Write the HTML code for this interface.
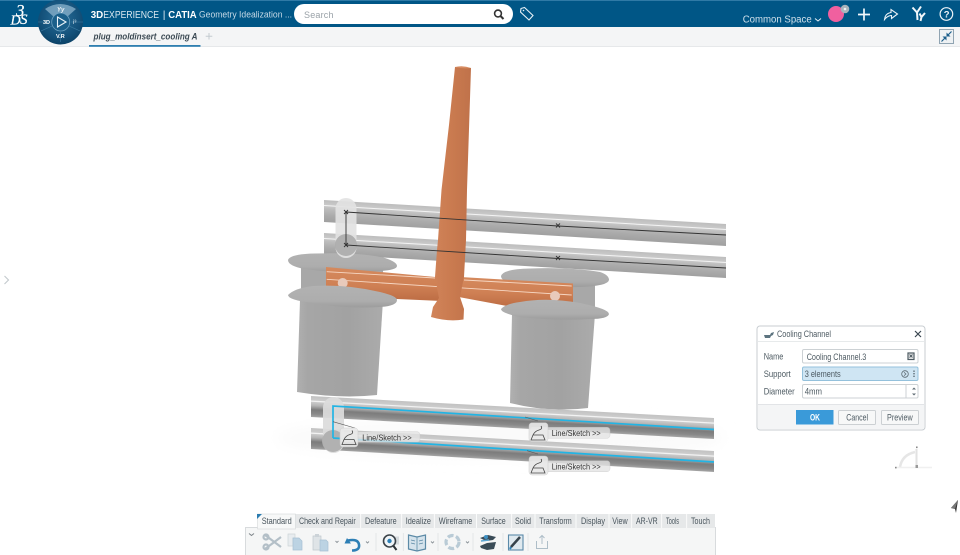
<!DOCTYPE html>
<html><head><meta charset="utf-8"><style>
html,body{margin:0;padding:0;width:960px;height:555px;overflow:hidden;background:#fff;font-family:"Liberation Sans",sans-serif}
svg{position:absolute;left:0;top:0}
</style></head><body>
<svg width="960" height="555" viewBox="0 0 960 555" xmlns="http://www.w3.org/2000/svg" font-family="Liberation Sans, sans-serif">
<defs>
<linearGradient id="pipe" x1="0" y1="0" x2="0" y2="1"><stop offset="0" stop-color="#bdbdbd"/><stop offset=".25" stop-color="#cbcbcb"/><stop offset=".4" stop-color="#bcbcbc"/><stop offset=".7" stop-color="#ababab"/><stop offset="1" stop-color="#a0a0a0"/></linearGradient>
<linearGradient id="pipe2" x1="0" y1="0" x2="0" y2="1"><stop offset="0" stop-color="#c2c2c2"/><stop offset=".25" stop-color="#cfcfcf"/><stop offset=".45" stop-color="#b5b5b5"/><stop offset=".65" stop-color="#7c7c7c"/><stop offset=".85" stop-color="#8a8a8a"/><stop offset="1" stop-color="#a5a5a5"/></linearGradient>
<linearGradient id="cyl" x1="0" y1="0" x2="1" y2="0"><stop offset="0" stop-color="#b0b0b0"/><stop offset=".12" stop-color="#a6a6a6"/><stop offset=".6" stop-color="#a2a2a2"/><stop offset="1" stop-color="#ababab"/></linearGradient>
<linearGradient id="cap" x1="0" y1="0" x2="0" y2="1"><stop offset="0" stop-color="#b2b2b2"/><stop offset=".7" stop-color="#adadad"/><stop offset="1" stop-color="#9c9c9c"/></linearGradient>
<linearGradient id="cop" x1="0" y1="0" x2="1" y2="0"><stop offset="0" stop-color="#d1845a"/><stop offset=".5" stop-color="#ca7b50"/><stop offset="1" stop-color="#c0724a"/></linearGradient>
<linearGradient id="copH" x1="0" y1="0" x2="0" y2="1"><stop offset="0" stop-color="#d58a5e"/><stop offset=".55" stop-color="#cf8054"/><stop offset="1" stop-color="#bd6d44"/></linearGradient>
<radialGradient id="comp" cx=".5" cy=".4" r=".65"><stop offset="0" stop-color="#2a6f9a"/><stop offset=".7" stop-color="#124f78"/><stop offset="1" stop-color="#0b3f62"/></radialGradient>
<filter id="b2" x="-20%" y="-50%" width="140%" height="200%"><feGaussianBlur stdDeviation="7"/></filter>
</defs>

<!-- top bar -->
<rect width="960" height="27" fill="#005686"/>
<rect width="960" height="1" fill="#2f7aa6"/>
<rect y="27" width="960" height="19" fill="#f4f5f6"/>
<rect y="46" width="960" height="1" fill="#e6e8ea"/>
<g font-family="Liberation Serif, serif" font-style="italic" fill="#fff" stroke="#fff" stroke-width=".2">
<text x="16" y="16" font-size="17">3</text>
<text x="10.500" y="24.500" font-size="14">D</text>
<text x="20" y="24" font-size="15">S</text>
</g>
<circle cx="60.500" cy="22" r="22.500" fill="url(#comp)"/>
<path d="M45 9Q60 -1 76 9L67 17Q60 13 54 17Z" fill="#86aec8" opacity=".8"/>
<path d="M41 31L52 26M80 31L69 26M60.500 32V42M38 22H50M71 22H83" stroke="#3f7ea5" stroke-width=".6"/>
<circle cx="60.700" cy="22" r="9" fill="#1a5f8a" stroke="#6fa3c3" stroke-width=".8"/>
<path d="M57.500 17L66 22L57.500 27Z" fill="none" stroke="#e8f2f8" stroke-width="1.100"/>
<text x="57" y="11.500" font-size="6" font-style="italic" font-weight="bold" fill="#eef4f8">Yy</text>
<text x="43" y="24" font-size="5.500" fill="#fff" font-weight="bold">3D</text>
<text x="73" y="24" font-size="6" fill="#dfeaf2">i³</text>
<text x="56" y="38" font-size="5.500" fill="#fff" font-weight="bold">V.R</text>

<g font-size="10.500" fill="#dbe8f0">
<text x="90.700" y="18" font-weight="bold" fill="#fff" textLength="12.500" lengthAdjust="spacingAndGlyphs">3D</text>
<text x="103.300" y="18" textLength="55.700" lengthAdjust="spacingAndGlyphs">EXPERIENCE</text>
<text x="162.800" y="18">|</text>
<text x="168.300" y="18" font-weight="bold" fill="#fff" textLength="28.400" lengthAdjust="spacingAndGlyphs">CATIA</text>
</g>
<text x="199" y="17.500" font-size="9" fill="#c5d9e6" textLength="93" lengthAdjust="spacingAndGlyphs">Geometry Idealization ...</text>
<rect x="294" y="4" width="219" height="20" rx="10" fill="#fff"/>
<text x="304" y="18" font-size="9" letter-spacing=".2" fill="#9aa2a8">Search</text>
<circle cx="498" cy="13.500" r="3.400" fill="none" stroke="#333" stroke-width="1.600"/><path d="M500.500 16L503.500 19" stroke="#333" stroke-width="2"/>
<path d="M521 8.500L524.500 7.500L533 15.500L529 20L520.500 12Z" fill="none" stroke="#e6f0f6" stroke-width="1.100"/><circle cx="523.500" cy="10.500" r=".8" fill="#e6f0f6"/>
<text x="742.700" y="22.500" font-size="10" fill="#cfe0eb" textLength="69" lengthAdjust="spacingAndGlyphs">Common Space</text>
<path d="M815 18.500L818 21L821 18.500" fill="none" stroke="#e6f0f6" stroke-width="1"/>
<circle cx="836" cy="14" r="8" fill="#f0609f"/>
<circle cx="845" cy="9" r="4.300" fill="#a9b4bc"/><circle cx="845" cy="9" r="1.300" fill="#eef2f4"/>
<path d="M864 8.500v12M858 14.500h12" stroke="#f2f7fa" stroke-width="1.700"/>
<path d="M884.500 19.500Q885 13.500 891 12.500V9.500L897.500 14L891.500 18.500V15.500Q887.500 15.500 884.500 19.500Z" fill="none" stroke="#eaf2f7" stroke-width="1.100"/>
<path d="M912.500 7.500L917 12.500L917.500 20M921 6.500L917 12.500M925 13L921.500 17M919.500 13.500L921.500 17L920.500 21" fill="none" stroke="#f2f7fa" stroke-width="2"/>
<circle cx="946.400" cy="14" r="6.300" fill="none" stroke="#eef4f8" stroke-width="1.200"/>
<text x="943.700" y="17.500" font-size="9.500" font-weight="bold" fill="#eef4f8">?</text>

<text x="93.500" y="39.500" font-size="9.500" font-weight="bold" font-style="italic" fill="#3c4a54" textLength="104" lengthAdjust="spacingAndGlyphs">plug_moldinsert_cooling A</text>
<rect x="89" y="45" width="111.500" height="1.800" fill="#2f7fb0"/>
<path d="M209 33v6.500M205.700 36.200h6.600" stroke="#c3cbd0" stroke-width="1"/>
<rect x="939.500" y="29.500" width="14" height="14" fill="#eef1f3" stroke="#90a4b2"/>
<path d="M951.500 31.500L947.500 35.500M941.500 41.500L945.500 37.500" stroke="#1d5f8b" stroke-width="1.200"/>
<path d="M946.500 32.500V36.500H950.500ZM946.500 40.500V36.500H942.500Z" fill="#1d5f8b"/>
<path d="M4.500 276L8.500 280L4.500 284" fill="none" stroke="#c3c9cd" stroke-width="1.100"/>

<!-- soft shadow -->
<ellipse cx="500" cy="438" rx="225" ry="20" fill="#fafafa" filter="url(#b2)"/>

<!-- upper pipes -->
<g transform="matrix(1 .0597 0 1 324 200)"><rect width="402" height="22" fill="url(#pipe)"/><rect y="5" width="402" height="1" fill="#f4f4f4"/></g>
<g transform="matrix(1 .0597 0 1 324 233)"><rect width="402" height="21" fill="url(#pipe)"/><rect y="5" width="402" height="1" fill="#f4f4f4"/></g>

<!-- back cylinders -->
<path d="M301 262H383V300H301Z" fill="#a8a8a8"/>
<path d="M514 280H595V315H514Z" fill="#a8a8a8"/>
<path d="M288 260Q290 254 315 253.500Q360 252 385 258Q397 262 397 266Q397 270 380 271Q340 274 305 269Q288 266 288 260Z" fill="url(#cap)"/>
<path d="M501 276Q503 269 530 268.500Q570 267 600 272Q609 275 609 280Q608 286 580 287Q540 288 512 283Q501 281 501 276Z" fill="url(#cap)"/>

<!-- copper -->
<polygon points="326,267 442,277.600 442,301 397,299 326,292" fill="url(#copH)"/>
<polygon points="456,276.800 573,283.500 573,306 510,306.500 456,296.500" fill="url(#copH)"/>
<path d="M326.700 271.700L435 278M326.700 279.300L439 286.700" stroke="#f6d6c2" stroke-width=".9" fill="none"/>
<path d="M464 280L571.700 286M458 287.700L571.700 295" stroke="#f6d6c2" stroke-width=".9" fill="none"/>
<path d="M455 67L471 68L467 190L466 240L464 277L460 297L464 309L463.500 319.500Q448 322 431 317L433 307L439 298L435 277L437 250L438 240L441.500 190L449 125Z" fill="url(#cop)"/>
<path d="M455 67Q463 65 471 68Q463 69 455 67Z" fill="#d78c62"/>
<ellipse cx="342.700" cy="283" rx="5" ry="5" fill="#e8cabb"/>
<ellipse cx="555" cy="296" rx="5" ry="5" fill="#e8cabb"/>

<!-- front cylinders -->
<path d="M300 300H383L377 395Q340 399 297 392Z" fill="url(#cyl)"/>
<path d="M512 314H595L588 408Q550 413 510 403Z" fill="url(#cyl)"/>
<path d="M288 295Q295 288 313 286Q347 284 380 292Q397 296 397 300Q397 306 380 307Q345 309 313 303Q288 300 288 295Z" fill="url(#cap)"/>
<path d="M501 309Q505 304 520 302Q547 297 580 303Q609 309 609 314Q608 319 590 319Q557 321 520 317Q501 313 501 309Z" fill="url(#cap)"/>

<!-- bubbles top -->
<rect x="335.500" y="198" width="21" height="60" rx="10.500" fill="#e2e2e2" opacity=".92"/>
<circle cx="346" cy="245" r="11" fill="#ababab" opacity=".9"/>
<g fill="none" stroke="#333" stroke-width=".9">
<path d="M346 212V245"/>
<path d="M346 212L558 226L726 235"/>
<path d="M346 245L558 258.500L726 268"/>
<path d="M344 210l4 4m0-4l-4 4M344 243l4 4m0-4l-4 4M556 223.500l4 4m0-4l-4 4M556 256l4 4m0-4l-4 4"/>
</g>

<!-- lower pipes -->
<g transform="matrix(1 .0546 0 1 311 396)"><rect width="403" height="21" fill="url(#pipe2)"/><rect y="4.500" width="403" height="1.200" fill="#f2f2f2"/></g>
<g transform="matrix(1 .0571 0 1 311 428)"><rect width="403" height="21" fill="url(#pipe2)"/><rect y="4.500" width="403" height="1.200" fill="#f2f2f2"/></g>
<rect x="323" y="397" width="21" height="56" rx="10.500" fill="#dcdcdc" opacity=".93"/>
<circle cx="333" cy="441" r="11" fill="#b0b0b0" opacity=".97"/>
<path d="M333 438V406L714 429.500M333 438L714 462" fill="none" stroke="#22b4e4" stroke-width="1.700"/>
<path d="M333 421.700L355 428M525 417L538 421M527 450.700L538 454" stroke="#555" stroke-width=".6"/>

<!-- sketch labels -->
<g font-size="8" fill="#333">
<rect x="340" y="431.700" width="80" height="10.500" rx="3" fill="#e4e4e4" opacity=".78" stroke="#c8c8c8" stroke-width=".5"/>
<rect x="340" y="428" width="18" height="19" rx="3" fill="#eaeaea" opacity=".9" stroke="#c8c8c8" stroke-width=".5"/>
<rect x="530" y="427.300" width="80" height="11" rx="3" fill="#e4e4e4" opacity=".78" stroke="#c8c8c8" stroke-width=".5"/>
<rect x="529" y="422.700" width="19" height="19" rx="3" fill="#eaeaea" opacity=".9" stroke="#c8c8c8" stroke-width=".5"/>
<rect x="530" y="460.700" width="80" height="11" rx="3" fill="#e4e4e4" opacity=".78" stroke="#c8c8c8" stroke-width=".5"/>
<rect x="529" y="456" width="19" height="19" rx="3" fill="#eaeaea" opacity=".9" stroke="#c8c8c8" stroke-width=".5"/>
<text x="362.300" y="440.500" textLength="49.400" lengthAdjust="spacingAndGlyphs">Line/Sketch &gt;&gt;</text>
<text x="551.700" y="436" textLength="49" lengthAdjust="spacingAndGlyphs">Line/Sketch &gt;&gt;</text>
<text x="551.700" y="469.300" textLength="49" lengthAdjust="spacingAndGlyphs">Line/Sketch &gt;&gt;</text>
</g>
<g fill="none" stroke="#444" stroke-width=".8">
<path d="M342 444.500h14l-2-5h-10zM344 439.500q2-4 6-5t2-4"/>
<path d="M531 440h14l-2-5h-10zM533 435q2-4 6-5t2-4"/>
<path d="M531 473h14l-2-5h-10zM533 468q2-4 6-5t2-4"/>
</g>

<!-- dialog -->
<rect x="757" y="326" width="168" height="104" rx="3" fill="#fff" stroke="#c8cdd1"/>
<rect x="758" y="341" width="166" height=".8" fill="#e1e4e6"/>
<rect x="758" y="404" width="166" height="25" fill="#f4f5f6"/>
<rect x="758" y="404" width="166" height=".8" fill="#dde0e3"/>
<path d="M764 335h6l1-2 3-1-1 3-2 1-1 2h-5z" fill="#5d7480"/>
<g font-size="9" fill="#4d5a62">
<text x="777" y="336.800" textLength="54" lengthAdjust="spacingAndGlyphs">Cooling Channel</text>
<text x="763.700" y="359.500" textLength="19.600" lengthAdjust="spacingAndGlyphs">Name</text>
<text x="763.700" y="377" textLength="27" lengthAdjust="spacingAndGlyphs">Support</text>
<text x="763.700" y="394.500" textLength="31" lengthAdjust="spacingAndGlyphs">Diameter</text>
</g>
<path d="M915 331l6 6m0-6l-6 6" stroke="#3a4650" stroke-width="1.200"/>
<rect x="802.500" y="349.500" width="115.500" height="13.500" rx="1.500" fill="#fff" stroke="#ccd1d4"/>
<rect x="802.500" y="367" width="115.500" height="13.500" rx="1.500" fill="#cfe5f3" stroke="#94c1dc"/>
<rect x="802.500" y="384.500" width="115.500" height="13.500" rx="1.500" fill="#fff" stroke="#ccd1d4"/>
<path d="M906 385v13" stroke="#ccd1d4"/>
<g font-size="9" fill="#4d5a62">
<text x="806.700" y="359.800" textLength="59.600" lengthAdjust="spacingAndGlyphs">Cooling Channel.3</text>
<text x="804.700" y="377" textLength="36" lengthAdjust="spacingAndGlyphs">3 elements</text>
<text x="804.700" y="394.500" textLength="17.300" lengthAdjust="spacingAndGlyphs">4mm</text>
</g>
<rect x="908" y="353" width="6" height="6.500" fill="#eee" stroke="#4d5a62" stroke-width="1.200"/>
<path d="M909.500 354.500l3 3m0-3l-3 3" stroke="#4d5a62"/>
<circle cx="905" cy="374" r="3.300" fill="none" stroke="#5d6a72" stroke-width=".8"/><path d="M904 372.300l2 1.700-2 1.700" fill="none" stroke="#5d6a72" stroke-width=".7"/>
<path d="M914 370.500v1.400M914 373v1.400M914 375.600v1.400" stroke="#48555d" stroke-width="1.200"/>
<path d="M912 389.500l2-2 2 2zM912 393.500l2 2 2-2z" fill="#5d6a72"/>
<rect x="796" y="410" width="37.500" height="14.500" fill="#3a9ad9"/>
<text x="810" y="420.500" font-size="9" font-weight="bold" fill="#fff" textLength="10" lengthAdjust="spacingAndGlyphs">OK</text>
<rect x="838.500" y="410.500" width="37" height="14" rx="1" fill="#f7f8f8" stroke="#ccd0d3"/>
<text x="846.300" y="420.500" font-size="9" fill="#4d5a62" textLength="21.700" lengthAdjust="spacingAndGlyphs">Cancel</text>
<rect x="881.500" y="410.500" width="37" height="14" rx="1" fill="#f7f8f8" stroke="#ccd0d3"/>
<text x="887" y="420.500" font-size="9" fill="#4d5a62" textLength="25.700" lengthAdjust="spacingAndGlyphs">Preview</text>

<!-- compass -->
<path d="M900 467Q902 455 915 452" fill="none" stroke="#e6e6e6" stroke-width="2.500"/>
<path d="M896 467.500H932" stroke="#f0f0f0" stroke-width="1.500"/>
<path d="M916.500 449V467" stroke="#e2e2e2" stroke-width="2"/>
<rect x="915.500" y="465" width="2.500" height="3" fill="#999"/>
<rect x="895" y="466.800" width="1.600" height="1.600" fill="#888"/><rect x="916" y="446.500" width="1.600" height="1.600" fill="#888"/>
<path d="M958 500L951 508L955 509L956 513Z" fill="#333"/>
<path d="M958 500L951 508L955 509Z" fill="#777"/>

<!-- toolbar -->
<rect x="245.500" y="527.500" width="470" height="28" fill="#f5f6f6" stroke="#d8dbdd"/>
<rect x="295" y="514" width="420" height="14" fill="#e6e8e9"/>
<rect x="257.500" y="514" width="38" height="15" fill="#f7f8f8" stroke="#d4d7d9" stroke-width=".6"/>
<path d="M257 514h5l-5 5z" fill="#2b7cb0"/>
<path d="M249 533.500l2.500 2 2.500-2" fill="none" stroke="#7c8388"/>
<g font-size="9" fill="#48545c">
<text x="261.700" y="523.800" textLength="30" lengthAdjust="spacingAndGlyphs">Standard</text>
<text x="299" y="523.800" textLength="56.700" lengthAdjust="spacingAndGlyphs">Check and Repair</text>
<text x="365" y="523.800" textLength="31.700" lengthAdjust="spacingAndGlyphs">Defeature</text>
<text x="405.700" y="523.800" textLength="25.300" lengthAdjust="spacingAndGlyphs">Idealize</text>
<text x="438.700" y="523.800" textLength="33.600" lengthAdjust="spacingAndGlyphs">Wireframe</text>
<text x="481.300" y="523.800" textLength="24.400" lengthAdjust="spacingAndGlyphs">Surface</text>
<text x="515" y="523.800" textLength="16" lengthAdjust="spacingAndGlyphs">Solid</text>
<text x="539.300" y="523.800" textLength="32.400" lengthAdjust="spacingAndGlyphs">Transform</text>
<text x="581" y="523.800" textLength="24" lengthAdjust="spacingAndGlyphs">Display</text>
<text x="612.300" y="523.800" textLength="15.400" lengthAdjust="spacingAndGlyphs">View</text>
<text x="636" y="523.800" textLength="21.700" lengthAdjust="spacingAndGlyphs">AR-VR</text>
<text x="666" y="523.800" textLength="13" lengthAdjust="spacingAndGlyphs">Tools</text>
<text x="691" y="523.800" textLength="19" lengthAdjust="spacingAndGlyphs">Touch</text>
</g>
<path d="M360.700 514v14M401.700 514v14M434.300 514v14M476.500 514v14M511.700 514v14M535 514v14M576 514v14M609 514v14M631.700 514v14M661.700 514v14M686.700 514v14" stroke="#fff" stroke-width=".8"/>
<!-- icons -->
<g fill="none" stroke="#b3bfc7" stroke-width="2.200"><path d="M265 535L281 547M265 549L281 537"/><circle cx="266" cy="537" r="2.500"/><circle cx="266" cy="547" r="2.500"/></g>
<path d="M288 534h7v4h-2v8h-5z" fill="#e8ecef" stroke="#cdd4d8" stroke-width=".7"/><path d="M293 538h6l3 3v9h-9z" fill="#bcd3e3" stroke="#a8c1d3" stroke-width=".7"/>
<path d="M313 536h8v14h-8z" fill="#dfe4e7" stroke="#c0c8cd" stroke-width=".7"/><path d="M315 534h4v3h-4z" fill="#ccd3d8"/><path d="M320 540h6l2 2v9h-8z" fill="#bcd3e3" stroke="#a8c1d3" stroke-width=".7"/>
<path d="M335.500 541l1.500 1.500 1.500-1.500" fill="none" stroke="#8a9298" stroke-width=".9"/>
<path d="M347 538l-2.500 5.500 6.500 0z" fill="#2d7fb5"/><path d="M348 540.500q10-2 11 4t-7 6" fill="none" stroke="#2d7fb5" stroke-width="2.600"/>
<path d="M366 541.500l1.500 1.500 1.500-1.500" fill="none" stroke="#8a9298" stroke-width=".9"/>
<path d="M376 533v18M403.300 533v18M438 533v18M473 533v18M503 533v18M528 533v18" stroke="#dfe2e4" stroke-width=".8"/>
<rect x="393" y="536.500" width="6" height="8" fill="#d6dbde"/>
<circle cx="389.500" cy="541" r="6" fill="#f0f5f8" stroke="#3a4248" stroke-width="1.600"/><circle cx="389.500" cy="541" r="2.200" fill="#2d7fb5"/><path d="M393.500 546l3 4" stroke="#2e3438" stroke-width="2"/>
<path d="M408.500 535l8.500 2 8.500-2v14l-8.500 2-8.500-2z" fill="#d5e3ec" stroke="#5c8aa6" stroke-width="1.200"/><path d="M417 537v14M411 540l4 1M411 543l4 1M419 541l4-1M419 544l4-1" stroke="#5c8aa6" stroke-width=".8"/>
<path d="M431 541.500l1.500 1.500 1.500-1.500" fill="none" stroke="#8a9298" stroke-width=".9"/>
<circle cx="452.500" cy="542" r="6.500" fill="none" stroke="#b9cbd6" stroke-width="3.200" stroke-dasharray="6 2.500"/>
<path d="M466 541.500l1.500 1.500 1.500-1.500" fill="none" stroke="#8a9298" stroke-width=".9"/>
<path d="M480 538l8-3 8 2-3 3-7 1zM480 546l7-3 9-1-2 7-7 1-6-2z" fill="#3a4c57"/><circle cx="486" cy="537" r="2" fill="#3d8fc2"/><path d="M481 541l8-1" stroke="#5ba6d3" stroke-width="1.500"/>
<rect x="508.500" y="535" width="14.500" height="15" fill="#dfe9ef" stroke="#5a8aa9" stroke-width="1.100"/>
<path d="M511 547l9-10" stroke="#37434b" stroke-width="2.500"/><path d="M510 549l1-2" stroke="#2d7fb5" stroke-width="2"/>
<path d="M536.500 541v7.500h11V541M542 544v-8M539.500 538l2.500-2.500 2.500 2.500" fill="none" stroke="#aebec8" stroke-width="1"/>
</svg>
</body></html>
